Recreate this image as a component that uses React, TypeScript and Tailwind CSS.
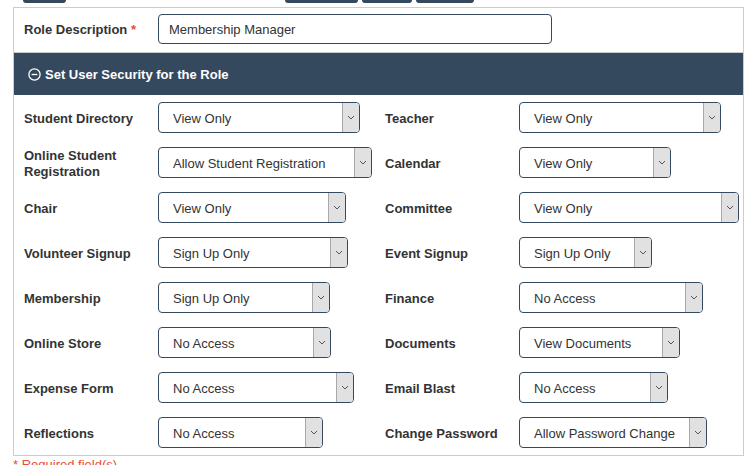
import React from "react";

type Field = { label: string; value: string; w: string };

const rows: [Field, Field][] = [
  [
    { label: "Student Directory", value: "View Only", w: "w-[202px]" },
    { label: "Teacher", value: "View Only", w: "w-[202px]" },
  ],
  [
    { label: "Online Student Registration", value: "Allow Student Registration", w: "w-[214px]" },
    { label: "Calendar", value: "View Only", w: "w-[152px]" },
  ],
  [
    { label: "Chair", value: "View Only", w: "w-[188px]" },
    { label: "Committee", value: "View Only", w: "w-[220px]" },
  ],
  [
    { label: "Volunteer Signup", value: "Sign Up Only", w: "w-[190px]" },
    { label: "Event Signup", value: "Sign Up Only", w: "w-[133px]" },
  ],
  [
    { label: "Membership", value: "Sign Up Only", w: "w-[172px]" },
    { label: "Finance", value: "No Access", w: "w-[184px]" },
  ],
  [
    { label: "Online Store", value: "No Access", w: "w-[173px]" },
    { label: "Documents", value: "View Documents", w: "w-[161px]" },
  ],
  [
    { label: "Expense Form", value: "No Access", w: "w-[196px]" },
    { label: "Email Blast", value: "No Access", w: "w-[149px]" },
  ],
  [
    { label: "Reflections", value: "No Access", w: "w-[165px]" },
    { label: "Change Password", value: "Allow Password Change", w: "w-[188px]" },
  ],
];

function FakeSelect({ value, w }: { value: string; w: string }) {
  return (
    <div className={`flex h-[31px] ${w} overflow-hidden rounded-[4px] border border-[#34495e] bg-white`}>
      <div className="flex flex-1 items-center pl-[14px] pt-[2px] text-[13px] text-[#333]">{value}</div>
      <div className="flex w-[17px] items-center justify-center border-l border-[#a8a8a8] bg-[#e1e1e1]">
        <svg width="8" height="5" viewBox="0 0 8 5" fill="none">
          <path d="M1 1l3 3 3-3" stroke="#555" strokeWidth="1" />
        </svg>
      </div>
    </div>
  );
}

function Cell({ f }: { f: Field }) {
  return (
    <div className="flex h-[31px] items-center">
      <div className="w-[134px] shrink-0 pr-[12px] pt-[2px] text-[13px] font-bold leading-[16px] text-[#333]">
        {f.label}
      </div>
      <FakeSelect value={f.value} w={f.w} />
    </div>
  );
}

export default function App() {
  return (
    <div className="h-[465px] overflow-hidden bg-white font-['Liberation_Sans',Arial,sans-serif]">
      {/* cut-off action buttons above the panel */}
      <div className="flex h-[3px]">
        <div className="ml-[23px] w-[43px] rounded-b-[3px] bg-[#34495e]" />
        <div className="ml-[219px] w-[73px] rounded-b-[3px] bg-[#34495e]" />
        <div className="ml-[4px] w-[50px] rounded-b-[3px] bg-[#34495e]" />
        <div className="ml-[4px] w-[58px] rounded-b-[3px] bg-[#34495e]" />
      </div>

      <div className="ml-[13px] mt-[4px] w-[731px] border border-[#cccccc]">
        <div className="flex items-center border-b border-[#cccccc] pb-[8px] pl-[10px] pt-[6px]">
          <div className="w-[134px] pt-[2px] text-[13px] font-bold text-[#333]">
            Role Description <span className="text-[#e74c3c]">*</span>
          </div>
          <div className="flex h-[30px] w-[394px] items-center rounded-[4px] border border-[#34495e] pl-[10px] pt-[2px] text-[13px] text-[#333]">
            Membership Manager
          </div>
        </div>

        <div className="flex h-[42px] items-center gap-[4px] bg-[#34495e] pl-[14px] pt-[1px] text-[13px] font-bold text-white">
          <svg width="13" height="13" viewBox="0 0 13 13" fill="none">
            <circle cx="6.5" cy="6.5" r="5.6" stroke="white" strokeWidth="1.3" />
            <path d="M3.6 6.5h5.8" stroke="white" strokeWidth="1.3" />
          </svg>
          <span className="pt-[1px]">Set User Security for the Role</span>
        </div>

        <div className="grid grid-cols-[361px_1fr] gap-y-[14px] pb-[7px] pl-[10px] pt-[7px]">
          {rows.map(([a, b]) => (
            <React.Fragment key={a.label}>
              <Cell f={a} />
              <Cell f={b} />
            </React.Fragment>
          ))}
        </div>
      </div>

      <div className="pl-[13px] pt-[1px] text-[13px] leading-[16px] text-[#e74c3c]">* Required field(s)</div>
    </div>
  );
}
